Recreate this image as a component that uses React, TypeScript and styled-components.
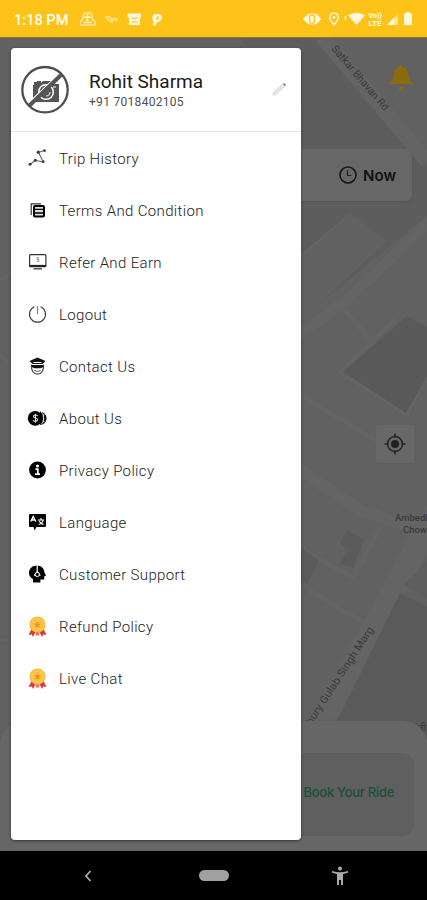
import React from 'react';
import styled, { createGlobalStyle } from 'styled-components';

const GlobalStyle = createGlobalStyle`
  * { box-sizing: border-box; }
  body { margin: 0; background: #000; font-family: Roboto, sans-serif; }
`;

const Phone = styled.div`
  width: 427px;
  height: 900px;
  display: flex;
  flex-direction: column;
  overflow: hidden;
`;

const StatusBar = styled.header`
  height: 38px;
  flex: none;
  display: flex;
  align-items: center;
  justify-content: space-between;
  padding: 0 15px 0 14px;
  background: #fec319;
  color: #fffdf5;
  border-bottom: 1px solid #8f7428;
`;

const StatusGroup = styled.div`
  display: flex;
  align-items: center;
`;

const Time = styled.span`
  width: 66px;
  font-size: 14.6px;
  font-weight: 500;
  white-space: nowrap;
  padding-top: 2px;
`;

const Scene = styled.main`
  flex: 1;
  min-height: 0;
  display: grid;
  grid-template: 813px / 427px;
  > * { grid-area: 1 / 1; }
`;

const MapCanvas = styled.svg`
  display: block;
  width: 427px;
  height: 813px;
  font-family: Roboto, 'Noto Sans', sans-serif;
`;

const Home = styled.section`
  display: flex;
  flex-direction: column;
  align-items: flex-end;
`;

const BellRow = styled.div`
  height: 111px;
  padding: 26px 14px 0 0;
`;

const NowCard = styled.div`
  width: 398px;
  height: 52px;
  margin-right: 15px;
  padding-right: 16px;
  display: flex;
  align-items: center;
  justify-content: flex-end;
  gap: 6px;
  border-radius: 6px;
  background: #676767;
  box-shadow: 0 1px 2px #555;
  color: #111;
  font: 600 15px Inter, sans-serif;
`;

const LocateButton = styled.button`
  width: 38px;
  height: 38px;
  margin: 224px 13px 0 0;
  padding: 0;
  border: 0;
  border-radius: 2px;
  background: #686868;
  box-shadow: 0 1px 2px #606060;
  display: grid;
  place-items: center;
`;

const Sheet = styled.div`
  width: 427px;
  height: 130px;
  margin-top: auto;
  padding: 32px 13px 15px;
  border-radius: 24px 24px 0 0;
  background: #666;
  box-shadow: 0 0 3px #606060;
`;

const RideCard = styled.div`
  height: 83px;
  padding-right: 20px;
  padding-bottom: 5px;
  display: flex;
  align-items: center;
  justify-content: flex-end;
  border-radius: 12px;
  background: #5f5f5f;
  color: #1b5137;
  font: 500 13px Inter, sans-serif;
  letter-spacing: -0.28px;
`;

const Drawer = styled.aside`
  width: 290px;
  height: 792px;
  margin: 10px 0 0 11px;
  display: flex;
  flex-direction: column;
  border-radius: 4px;
  background: #fff;
  box-shadow: 0 1px 3px #333;
`;

const Profile = styled.div`
  height: 84px;
  flex: none;
  padding: 0 13px 0 9px;
  display: flex;
  align-items: center;
  border-bottom: 1px solid #e7e7e7;
`;

const Identity = styled.div`
  flex: 1;
  margin-left: 19px;
  padding-top: 2px;
`;

const Name = styled.div`
  font-size: 19px;
  line-height: 23px;
  letter-spacing: 0;
  color: #1b1b1b;
`;

const PhoneNumber = styled.div`
  margin-top: 1px;
  font-size: 12px;
  line-height: 17px;
  letter-spacing: 0.3px;
  color: #505050;
`;

const Menu = styled.nav`
  display: flex;
  flex-direction: column;
`;

const MenuItem = styled.a`
  height: 52.1px;
  padding: 1px 0 0 15px;
  display: flex;
  align-items: center;
  gap: 10px;
  color: #222;
  font-size: 15px;
  font-weight: 300;
  letter-spacing: 0.35px;
  svg { flex: none; }
`;

const NavBar = styled.footer`
  height: 49px;
  flex: none;
  display: flex;
  align-items: center;
  background: #000;
  padding-left: 84px;
`;

const HomePill = styled.span`
  width: 30px;
  height: 11px;
  margin: 0 102px 0 107px;
  border-radius: 6px;
  background: #a0a0a0;
`;

const Glyph = ({ w = 23, h = 22, children }: { w?: number; h?: number; children: React.ReactNode }) => (
  <svg width={w} height={h} viewBox={`0 0 ${w} ${h}`} fill="none">{children}</svg>
);

const TripIcon = () => (
  <Glyph>
    <path d="M4 16.5 9.3 12.3 17.2 14 12.5 4.3 18.5 2.5" stroke="#666" strokeWidth="1.1" />
    <g fill="#3c4448"><circle cx="4" cy="16.3" r="1.5" /><circle cx="9.3" cy="12.3" r="1.6" /><circle cx="17.2" cy="13.7" r="1.4" /><circle cx="12.3" cy="4.3" r="1.7" /><circle cx="18.5" cy="2.7" r="1.4" /></g>
  </Glyph>
);

const TermsIcon = () => (
  <Glyph>
    <path d="M5.2 15V3.8H15" stroke="#333" strokeWidth="1.2" />
    <rect x="8" y="6" width="10" height="10.6" rx="1" fill="#ddd" stroke="#000" strokeWidth="2" />
    <path d="M8 9.3h10M8 13h10" stroke="#000" strokeWidth="1.3" />
  </Glyph>
);

const ReferIcon = () => (
  <Glyph>
    <rect x="3.6" y="2.7" width="16.3" height="12" rx="1" stroke="#333" strokeWidth="1.2" />
    <path d="M3.5 13.8h16.5" stroke="#222" strokeWidth="1.8" />
    <path d="M7.5 16.8h8.5" stroke="#555" strokeWidth="1.5" />
    <path d="M13 5.5h-2v2h2v2h-2M12 4.8v5.6" stroke="#999" strokeWidth=".8" />
  </Glyph>
);

const LogoutIcon = () => (
  <Glyph>
    <path d="M8.4 2.8a8 8 0 1 0 6.2 0" stroke="#444" strokeWidth="1.2" />
    <path d="M11.5 2v8" stroke="#888" strokeWidth="1.3" />
  </Glyph>
);

const ContactIcon = () => (
  <Glyph>
    <path d="M3.5 5 11.5 1.5l8 3.5-3 3H6.5Z" fill="#111" />
    <path d="M7.5 6.5h8" stroke="#fff" strokeWidth="1" />
    <path d="M5.5 8.5c-.8 6 2.3 9.7 6 9.7s6.8-3.7 6-9.7" stroke="#555" strokeWidth="1.2" />
    <path d="M5.5 9h12v2l-3 1.2h-6L5.5 11Z" fill="#111" />
    <path d="M8.5 14.5q3 2.2 6 0" stroke="#555" />
  </Glyph>
);

const AboutIcon = () => (
  <Glyph>
    <path d="M14 3.4c3 .5 6.5 2.6 6.5 6.8s-3.5 6.8-6.5 6.8Z" fill="#111" />
    <path d="M15 3.8a9 9 0 0 1 0 12.8M18.4 6.8h-1v7h1" stroke="#ddd" strokeWidth=".9" />
    <circle cx="9.2" cy="10.3" r="7.4" fill="#000" />
    <path d="M11.7 8C10.7 6.5 7.4 6.7 7.5 8.5s4.4 1.2 4.2 3.1-3.5 2.3-4.7.8M9.5 6v8.7" stroke="#ddd" strokeWidth="1.1" />
  </Glyph>
);

const PrivacyIcon = () => (
  <Glyph>
    <circle cx="11.5" cy="10" r="8.4" fill="#000" />
    <circle cx="11.5" cy="6" r="1.5" fill="#fff" />
    <path d="M9.5 9.1h2.3v5M9 14.1h5" stroke="#fff" strokeWidth="1.7" />
  </Glyph>
);

const LanguageIcon = () => (
  <Glyph>
    <path d="M4 2h15q1 0 1 1v11q0 1-1 1H10.5L8.5 18.5 7.5 15H4q-1 0-1-1V3q0-1 1-1Z" fill="#000" />
    <path d="m4.8 9.5 2.4-5 2.6 5M5.6 8h3.2" stroke="#fff" strokeWidth="1.4" />
    <path d="M12 8h6M15 6v2M17 8.5q-.6 3-4.4 4M13.2 9q1 2.5 4.4 3.5" stroke="#fff" strokeWidth="1.1" />
  </Glyph>
);

const SupportIcon = () => (
  <Glyph>
    <path d="M7 18.5V15Q3 13 3 9C3 4.2 6.8 1.5 11 1.5s7.2 2.8 7.4 6.8l1.6 3.4-1.8.8v3h-3.8v3Z" fill="#000" />
    <path d="M11.2 1V7.5l-3 4.2M11.2 7.5l3 4.2" stroke="#fff" strokeWidth="1.2" />
    <circle cx="11.3" cy="10.5" r="2.1" fill="#000" stroke="#fff" />
  </Glyph>
);

const MedalIcon = () => (
  <Glyph>
    <path d="m6 12-3.5 7 3.3-.5 1.2 2.5L10 15ZM17 12l3.5 7-3.3-.5L16 21 13 15Z" fill="#d93a40" />
    <path d="M9.8 14h3.4v6l-1.7-1-1.7 1Z" fill="#ef6a50" />
    <circle cx="11.5" cy="8.5" r="7.2" fill="#ffce4b" stroke="#f9bd43" strokeWidth="1.8" />
    <circle cx="11.5" cy="8.5" r="5.2" fill="#fbc044" />
    <path d="m11.5 5.4 1 2 2.2.3-1.6 1.6.4 2.2-2-1-2 1 .4-2.2-1.6-1.6 2.2-.3Z" fill="#e79522" />
  </Glyph>
);

const items = [
  { label: 'Trip History', Icon: TripIcon },
  { label: 'Terms And Condition', Icon: TermsIcon },
  { label: 'Refer And Earn', Icon: ReferIcon },
  { label: 'Logout', Icon: LogoutIcon },
  { label: 'Contact Us', Icon: ContactIcon },
  { label: 'About Us', Icon: AboutIcon },
  { label: 'Privacy Policy', Icon: PrivacyIcon },
  { label: 'Language', Icon: LanguageIcon },
  { label: 'Customer Support', Icon: SupportIcon },
  { label: 'Refund Policy', Icon: MedalIcon },
  { label: 'Live Chat', Icon: MedalIcon },
];

const StatusLeftIcons = () => (
  <Glyph w={84} h={18}>
    <path d="M3 9V7Q3 2.5 7.5 2.5T12 7v2l3 3v3H0v-3Z" stroke="#fff3c7" strokeWidth="1.2" />
    <path d="M4.5 7.2h6M3.5 12.3h8M7.5 4v7" stroke="#fff3c7" strokeWidth="1.8" />
    <path d="m25 7 4-.5 3 2.5 5-.5-1 2.5M26.5 8.5 32 12l1-3" stroke="#ffe697" strokeWidth="1.5" />
    <path d="M47.5 3.5h13.5v4H47.5ZM49 6.5h11v8.5H49Z" fill="#fff8df" />
    <path d="M52 7q2.5 4 5 0M52 12h5" stroke="#fec319" strokeWidth="1.2" />
    <path d="M74 4h5q3.5.8 2.8 4.2T77 12l-1.3 3.5h-3l1-4q-2-1.5-1-5Z" fill="#fff8df" />
    <path d="m76 9.5 1-3h2l-.8 3Z" fill="#fec319" />
  </Glyph>
);

const StatusRightIcons = () => (
  <Glyph w={110} h={18}>
    <path d="m1 9 4-4 3-1.5h5L16 5l3 4-3 4-3 1.5H8L5 13Z" fill="#fff8df" />
    <rect x="7.7" y="5" width="4.7" height="8" rx="1.5" stroke="#fec319" strokeWidth="1.3" />
    <path d="M27.8 7.3a4.2 4.2 0 1 1 8.4 0c0 2.8-4.2 7.4-4.2 7.4s-4.2-4.6-4.2-7.4Z" stroke="#fff8df" strokeWidth="1.4" />
    <circle cx="32" cy="7.4" r="1.4" fill="#fff8df" />
    <path d="M43.5 6v4" stroke="#fff8df" strokeWidth="1.5" />
    <path d="M46 5.3q8.5-5 17 0L54.5 15Z" fill="#fff8df" />
    <g fill="#fffdf5" fontSize="6.6" fontWeight="700"><text x="66.5" y="7.6" textLength="13.5" lengthAdjust="spacingAndGlyphs">Vo))</text><text x="66.5" y="15.5" textLength="13" lengthAdjust="spacingAndGlyphs">LTE</text></g>
    <path d="M85 15 96 4v11Z" fill="#ffe793" /><path d="m85 15 7-7v7Z" fill="#fff8df" />
    <path d="M102 3.5h2V2h4v1.5h2V15h-8Z" fill="#fff8df" />
  </Glyph>
);

const CityMap = () => (
  <MapCanvas viewBox="0 38 427 813">
    <rect y="38" width="427" height="813" fill="#616161" />
    <path d="M240 38h80l107 128v50L302 318V110Z" fill="#5d5d5d" />
    <path d="m301 256 50-43 36 28-86 80Z" fill="#616161" />
    <g stroke="#646464" fill="none">
      <path d="m322 37 105 124" strokeWidth="15" />
      <path d="m290 342 60-45 83-78" strokeWidth="11" />
      <path d="m338 302 38 44" strokeWidth="5" />
      <path d="m301 256 50-43" strokeWidth="2" />
      <path d="m395 319-54 53 66 42 30-62M300 395l80 48M304 550l49 28 27-50M308 590l59 34" strokeWidth="5" />
      <path d="m297 468 64 43 66 20" strokeWidth="12" />
      <path d="M436 511 310 745" strokeWidth="23" />
      <path d="m0 355 12 12M0 280l12-8M0 640h12" strokeWidth="3" />
    </g>
    <path d="m343 372 64-56 20 11v49l-21 37Z" fill="#595959" />
    <path d="m301 548 18 13-12 23-6-3ZM347 530l17 10-11 28-13-5 7-13-7-6Z" fill="#5b5b5b" />
    <path d="m400 593 27 14v133H328Z" fill="#5a5a5a" />
    <path d="M427 562v36l-24-13Z" fill="#5e5e5e" />
    <g fill="#3b3b3b" fontSize="10.5">
      <text transform="translate(331 49) rotate(49.5)" textLength="82">Satkar Bhavan Rd</text>
      <text transform="translate(308 731) rotate(-57)" textLength="121" lengthAdjust="spacingAndGlyphs">dhury Gulab Singh Marg</text>
      <text x="395" y="521" fontSize="9.5" fontWeight="500">Ambedkar</text>
      <text x="403" y="533" fontSize="9.5" fontWeight="500">Chowk</text>
      <text x="411" y="731" fontSize="10">गली</text>
    </g>
  </MapCanvas>
);

export default function App() {
  return (
    <>
      <GlobalStyle />
      <Phone>
        <StatusBar>
          <StatusGroup><Time>1:18 PM</Time><StatusLeftIcons /></StatusGroup>
          <StatusRightIcons />
        </StatusBar>
        <Scene>
          <CityMap />
          <Home>
            <BellRow>
              <Glyph w={24} h={30}>
                <path d="M12 1c1.2 0 1.7.8 1.7 2 4.6 1.2 5.5 5 5.8 10 .2 3 1.7 4 3.8 5.5V20H.7v-1.5C2.8 17 4.3 16 4.5 13c.3-5 1.2-8.8 5.8-10 0-1.2.5-2 1.7-2ZM9.5 23h5q-.5 4-2.5 4t-2.5-4Z" fill="#8b6b0b" />
              </Glyph>
            </BellRow>
            <NowCard>
              <Glyph w={18} h={18}><circle cx="9" cy="9" r="8" stroke="#161616" strokeWidth="1.6" /><path d="M8.5 4v5.5h4" stroke="#222" strokeWidth="1.2" /></Glyph>
              Now
            </NowCard>
            <LocateButton>
              <Glyph w={22} h={22}><circle cx="11" cy="11" r="7.5" stroke="#252525" strokeWidth="1.6" /><circle cx="11" cy="11" r="4" fill="#202020" /><path d="M11 .5v4M11 17.5v4M.5 11h4M17.5 11h4" stroke="#252525" strokeWidth="1.6" /></Glyph>
            </LocateButton>
            <Sheet><RideCard>Book Your Ride</RideCard></Sheet>
          </Home>
          <Drawer>
            <Profile>
              <Glyph w={50} h={50}>
                <path d="M14 17h3v-1h4v2l2-2h8l2 3h6v18H13V20h1Z" fill="#555" />
                <circle cx="26" cy="27" r="7.3" fill="#555" stroke="#fff" strokeWidth="1.5" />
                <path d="M22 27a4 4 0 0 1 5-4M30 27a4 4 0 0 1-4 4" stroke="#ddd" strokeWidth="1.2" />
                <path d="M33 22h3" stroke="#fff" />
                <path d="M9 37.5 39 9" stroke="#fff" strokeWidth="1.5" />
                <path d="M9 41 41 10" stroke="#555" strokeWidth="4" />
                <circle cx="25" cy="24.7" r="22.7" stroke="#4f4f4f" strokeWidth="2.3" />
              </Glyph>
              <Identity><Name>Rohit Sharma</Name><PhoneNumber>+91 7018402105</PhoneNumber></Identity>
              <Glyph w={18} h={18}><path d="m3 14 1-3 9-8 2 2-9 8Z" fill="#e8e8e8" stroke="#c4c4c4" strokeWidth=".7" /><path d="m13 3 1-1 2 2-1 1Z" fill="#777" /></Glyph>
            </Profile>
            <Menu>
              {items.map(({ label, Icon }) => <MenuItem key={label}><Icon />{label}</MenuItem>)}
            </Menu>
          </Drawer>
        </Scene>
        <NavBar>
          <Glyph w={8} h={12}><path d="M6.5 1 2 6l4.5 5" stroke="#aaa" strokeWidth="1.8" /></Glyph>
          <HomePill />
          <Glyph w={18} h={20}><circle cx="9" cy="2.5" r="2" fill="#aaa" /><path d="M1 5q8 2.5 16 0v1.8L12 8v11h-2v-5H8v5H6V8L1 6.8Z" fill="#aaa" /></Glyph>
        </NavBar>
      </Phone>
    </>
  );
}
